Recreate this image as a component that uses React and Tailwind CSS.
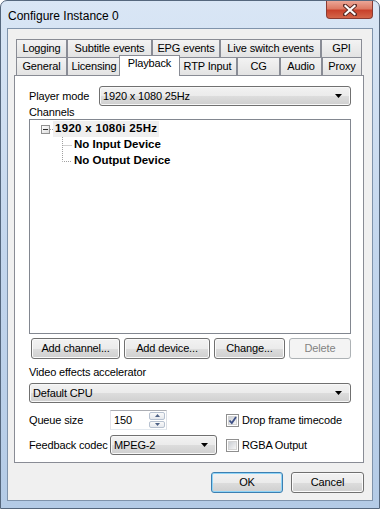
import React from 'react';
import clsx from 'clsx';

const FONT = { fontFamily: '"Liberation Sans", Arial, sans-serif' };

const btnFace = 'bg-[linear-gradient(#f2f2f2_0%,#ebebeb_50%,#dddddd_50%,#cfcfcf_100%)]';

const DownArrow = () => (
  <svg width="7" height="4" viewBox="0 0 7 4">
    <path d="M0 0h7L3.5 4z" fill="#000" />
  </svg>
);

const Combo = ({ value, className }) => (
  <div
    className={clsx(
      'h-[20px] flex items-center rounded-[3px] border border-[#707070] pl-[3px] pr-[8px] shadow-[inset_0_0_0_1px_#f8f8f8]',
      btnFace,
      className
    )}
  >
    <span className="flex-1 truncate">{value}</span>
    <DownArrow />
  </div>
);

const Button = ({ children, className, disabled, primary }) => (
  <div
    className={clsx(
      'h-[21px] flex items-center justify-center rounded-[3px] border',
      disabled
        ? 'border-[#adb2b5] bg-[#f4f4f4] text-[#838383]'
        : primary
        ? 'border-[#3c7fb1] shadow-[inset_0_0_0_1px_#8fd4f7] ' + btnFace
        : 'border-[#707070] shadow-[inset_0_0_0_1px_#fbfbfb] ' + btnFace,
      className
    )}
  >
    {children}
  </div>
);

const Checkbox = ({ checked, label }) => (
  <div className="flex items-center gap-[3px]">
    <div className="w-[13px] h-[13px] border border-[#8f8f8f] bg-white p-[1px]">
      <div className="w-full h-full border border-[#d4d4d4] bg-gradient-to-br from-[#cbcfd5] to-[#f6f6f6] relative">
        {checked && (
          <svg width="9" height="9" viewBox="0 0 9 9" className="absolute -left-[1px] -top-[1px]">
            <path d="M1.5 4.5L3.8 7L8 1" stroke="#3d4f86" strokeWidth="1.8" fill="none" />
          </svg>
        )}
      </div>
    </div>
    <span>{label}</span>
  </div>
);

const Tab = ({ label, w, selected }) => (
  <div
    style={{ width: w + (selected ? 4 : 0) }}
    className={clsx(
      'flex justify-center border-t border-l border-r border-[#898c95] shrink-0',
      selected
        ? 'relative z-10 -mx-[2px] -mt-[2px] h-[21px] bg-white pt-[2px] items-start'
        : 'h-[18px] items-center bg-gradient-to-b from-[#f3f3f3] to-[#e3e3e3]'
    )}
  >
    {label}
  </div>
);

const TreeLines = ({ last }) => (
  <svg width="12" height="16" viewBox="0 0 12 16" className="shrink-0">
    <path d={last ? 'M0.5 0V8.5H10' : 'M0.5 0V16M0.5 8.5H10'} stroke="#a0a0a0" strokeDasharray="1 1" fill="none" />
  </svg>
);

export default function App() {
  return (
    <div
      style={FONT}
      className="w-[380px] h-[509px] flex flex-col border border-[#55677d] rounded-t-[7px] bg-gradient-to-b from-[#d9e6f5] via-[#c3d6ed] to-[#b4cbe6] text-[11px] tracking-[-0.15px] text-black leading-none"
    >
      <div className="h-[27px] flex items-start shrink-0">
        <span className="ml-[7px] mt-[9px] text-[12px] tracking-normal">Configure Instance 0</span>
        <div className="ml-auto mr-[6px] w-[47px] h-[18px] rounded-b-[4px] border border-t-0 border-[#8a3b32] bg-[linear-gradient(#eba696_0%,#dc7a64_45%,#c8412b_55%,#d4664a_100%)] flex items-center justify-center">
          <svg width="14" height="12" viewBox="0 0 14 12">
            <path d="M2 1.5L12 10.5M12 1.5L2 10.5" stroke="#5a2a24" strokeWidth="4" strokeLinecap="square" />
            <path d="M2.5 2L11.5 10M11.5 2L2.5 10" stroke="#fff" strokeWidth="2.2" strokeLinecap="square" />
          </svg>
        </div>
      </div>

      <div className="ml-[6px] w-[366px] h-[473px] border border-[#7f93ab] bg-[#f0f0f0] pl-[6px] pt-[10px] flex flex-col">
        <div className="ml-[2px] flex h-[18px]">
          <Tab label="Logging" w={51} />
          <Tab label="Subtitle events" w={85} />
          <Tab label="EPG events" w={68} />
          <Tab label="Live switch events" w={101} />
          <Tab label="GPI" w={41} />
        </div>
        <div className="ml-[2px] flex h-[18px]">
          <Tab label="General" w={51} />
          <Tab label="Licensing" w={54} />
          <Tab label="Playback" w={57} selected />
          <Tab label="RTP Input" w={59} />
          <Tab label="CG" w={43} />
          <Tab label="Audio" w={42} />
          <Tab label="Proxy" w={40} />
        </div>

        <div className="w-[350px] h-[388px] border border-[#898c95] bg-white pl-[14px] pt-[10px] flex flex-col">
          <div className="flex items-center h-[20px]">
            <span className="w-[70px]">Player mode</span>
            <Combo value="1920 x 1080 25Hz" className="w-[252px]" />
          </div>
          <div className="h-[13px] flex items-center">Channels</div>
          <div className="w-[322px] h-[215px] border border-[#828790] bg-white pt-[1px] font-bold text-[11.5px] tracking-normal">
            <div className="h-[16px] flex items-center pl-[11px]">
              <div className="w-[9px] h-[9px] border border-[#919191] bg-gradient-to-br from-white to-[#dcdcdc] flex items-center justify-center">
                <div className="w-[5px] h-[1px] bg-[#2b2b2b]" />
              </div>
              <svg width="3" height="1" className="shrink-0">
                <path d="M0 0.5H3" stroke="#a0a0a0" strokeDasharray="1 1" />
              </svg>
              <span className="h-[16px] flex items-center px-[2px] bg-[#efefef] tracking-[0.3px]">1920 x 1080i 25Hz</span>
            </div>
            <div className="h-[16px] flex items-center pl-[32px]">
              <TreeLines />
              <span>No Input Device</span>
            </div>
            <div className="h-[16px] flex items-center pl-[32px]">
              <TreeLines last />
              <span>No Output Device</span>
            </div>
          </div>

          <div className="mt-[4px] ml-[2px] flex gap-[4px]">
            <Button className="w-[89px]">Add channel...</Button>
            <Button className="w-[86px]">Add device...</Button>
            <Button className="w-[71px]">Change...</Button>
            <Button className="w-[62px]" disabled>Delete</Button>
          </div>

          <div className="mt-[7px] h-[13px] flex items-center">Video effects accelerator</div>
          <Combo value="Default CPU" className="mt-[4px] w-[322px]" />

          <div className="mt-[7px] grid grid-cols-[81px_116px_auto] grid-rows-[20px_20px] gap-y-[5px] items-center">
            <span>Queue size</span>
            <div className="w-[57px] h-[20px] flex border border-[#abadb3] border-r-[#dbdfe6] border-b-[#e3e9ef] border-l-[#e2e3ea] bg-white">
              <span className="flex-1 pl-[3px] flex items-center">150</span>
              <div className="w-[17px] flex flex-col gap-[1px] p-[1px] pl-0">
                {[0, 1].map((i) => (
                  <div
                    key={i}
                    className="flex-1 border border-[#b7c1d0] rounded-[2px] bg-gradient-to-b from-[#fafafa] to-[#e6e9ee] flex items-center justify-center"
                  >
                    <svg width="5" height="3" viewBox="0 0 5 3">
                      <path d={i === 0 ? 'M0 3h5L2.5 0z' : 'M0 0h5L2.5 3z'} fill="#4d6185" />
                    </svg>
                  </div>
                ))}
              </div>
            </div>
            <Checkbox checked label="Drop frame timecode" />
            <span>Feedback codec</span>
            <Combo value="MPEG-2" className="w-[107px]" />
            <Checkbox label="RGBA Output" />
          </div>
        </div>

        <div className="w-[350px] mt-[9px] flex justify-end gap-[8px]">
          <Button className="w-[72px]" primary>OK</Button>
          <Button className="w-[73px]">Cancel</Button>
        </div>
      </div>
    </div>
  );
}
